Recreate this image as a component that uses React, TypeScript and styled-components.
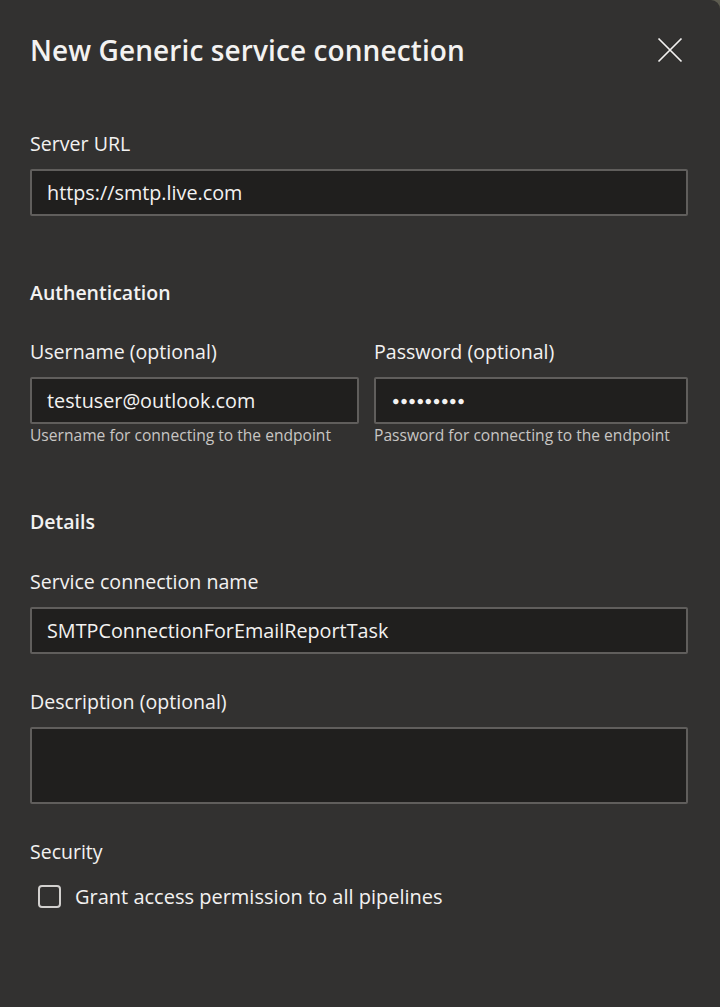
import React from "react";
import styled, { createGlobalStyle } from "styled-components";

const Global = createGlobalStyle`
  html, body { margin: 0; padding: 0; background: #5d5c50; }
  body { font-family: "Open Sans", "Noto Sans", sans-serif; }
  * { box-sizing: border-box; }
`;

const Panel = styled.div`
  width: 720px;
  height: 1007px;
  background: #323130;
  border-top-right-radius: 9px;
  padding: 0 32px 0 30px;
  color: #f3f2f1;
  display: flex;
  flex-direction: column;
`;

const Header = styled.div`
  display: flex;
  align-items: center;
  justify-content: space-between;
  height: 100px;
`;

const Title = styled.h1`
  margin: 0;
  font-size: 28px;
  font-weight: 600;
  letter-spacing: 0.1px;
  color: #f3f2f1;
`;

const Close = styled.button`
  width: 28px;
  height: 28px;
  padding: 0;
  margin-right: 4px;
  border: 0;
  background: transparent;
  display: flex;
  align-items: center;
  justify-content: center;
`;

const Field = styled.div<{ $mt?: number }>`
  display: flex;
  flex-direction: column;
  margin-top: ${(p) => p.$mt ?? 0}px;
`;

const Label = styled.label`
  font-size: 19.6px;
  line-height: 26px;
  color: #f3f2f1;
  margin-bottom: 12px;
  padding-top: 1px;
`;

const SectionTitle = styled.div<{ $mt: number; $bold?: boolean }>`
  font-size: 19.5px;
  font-weight: ${(p) => (p.$bold ? 600 : 400)};
  line-height: 26px;
  margin-top: ${(p) => p.$mt}px;
`;

const Input = styled.div<{ $h?: number }>`
  height: ${(p) => p.$h ?? 47}px;
  background: #201f1e;
  border: 2px solid #605e5c;
  border-radius: 2px;
  padding: 0 15px;
  display: flex;
  align-items: center;
  font-size: 19.8px;
  color: #f3f2f1;
`;

const Dots = styled.span`
  font-size: 12.5px;
  letter-spacing: 0.6px;
  padding-left: 1px;
`;

const Help = styled.div`
  font-size: 15.6px;
  line-height: 21px;
  color: #c8c6c4;
  margin-top: 1px;
`;

const Row = styled.div`
  display: grid;
  grid-template-columns: 329px 1fr;
  gap: 15px;
  margin-top: 32px;
`;

const CheckRow = styled.div`
  display: flex;
  align-items: center;
  gap: 14px;
  margin-top: 18px;
  padding-left: 8px;
`;

const Box = styled.span`
  width: 23px;
  height: 23px;
  border: 2px solid #d2d0ce;
  border-radius: 4px;
`;

const CheckText = styled.span`
  font-size: 20px;
  color: #f3f2f1;
`;

export default function App() {
  return (
    <>
      <Global />
      <Panel>
        <Header>
          <Title>New Generic service connection</Title>
          <Close aria-label="Close">
            <svg width="26" height="26" viewBox="0 0 26 26">
              <path d="M1.5 1.5 L24.5 24.5 M24.5 1.5 L1.5 24.5" stroke="#f3f2f1" strokeWidth="1.7" fill="none" />
            </svg>
          </Close>
        </Header>

        <Field $mt={30}>
          <Label>Server URL</Label>
          <Input>https://smtp.live.com</Input>
        </Field>

        <SectionTitle $mt={64} $bold>Authentication</SectionTitle>

        <Row>
          <Field>
            <Label>Username (optional)</Label>
            <Input>testuser@outlook.com</Input>
            <Help>Username for connecting to the endpoint</Help>
          </Field>
          <Field>
            <Label>Password (optional)</Label>
            <Input>
              <Dots>●●●●●●●●●</Dots>
            </Input>
            <Help>Password for connecting to the endpoint</Help>
          </Field>
        </Row>

        <SectionTitle $mt={63} $bold>Details</SectionTitle>

        <Field $mt={33}>
          <Label>Service connection name</Label>
          <Input>SMTPConnectionForEmailReportTask</Input>
        </Field>

        <Field $mt={34}>
          <Label>Description (optional)</Label>
          <Input $h={77} />
        </Field>

        <SectionTitle $mt={35}>Security</SectionTitle>

        <CheckRow>
          <Box />
          <CheckText>Grant access permission to all pipelines</CheckText>
        </CheckRow>
      </Panel>
    </>
  );
}
